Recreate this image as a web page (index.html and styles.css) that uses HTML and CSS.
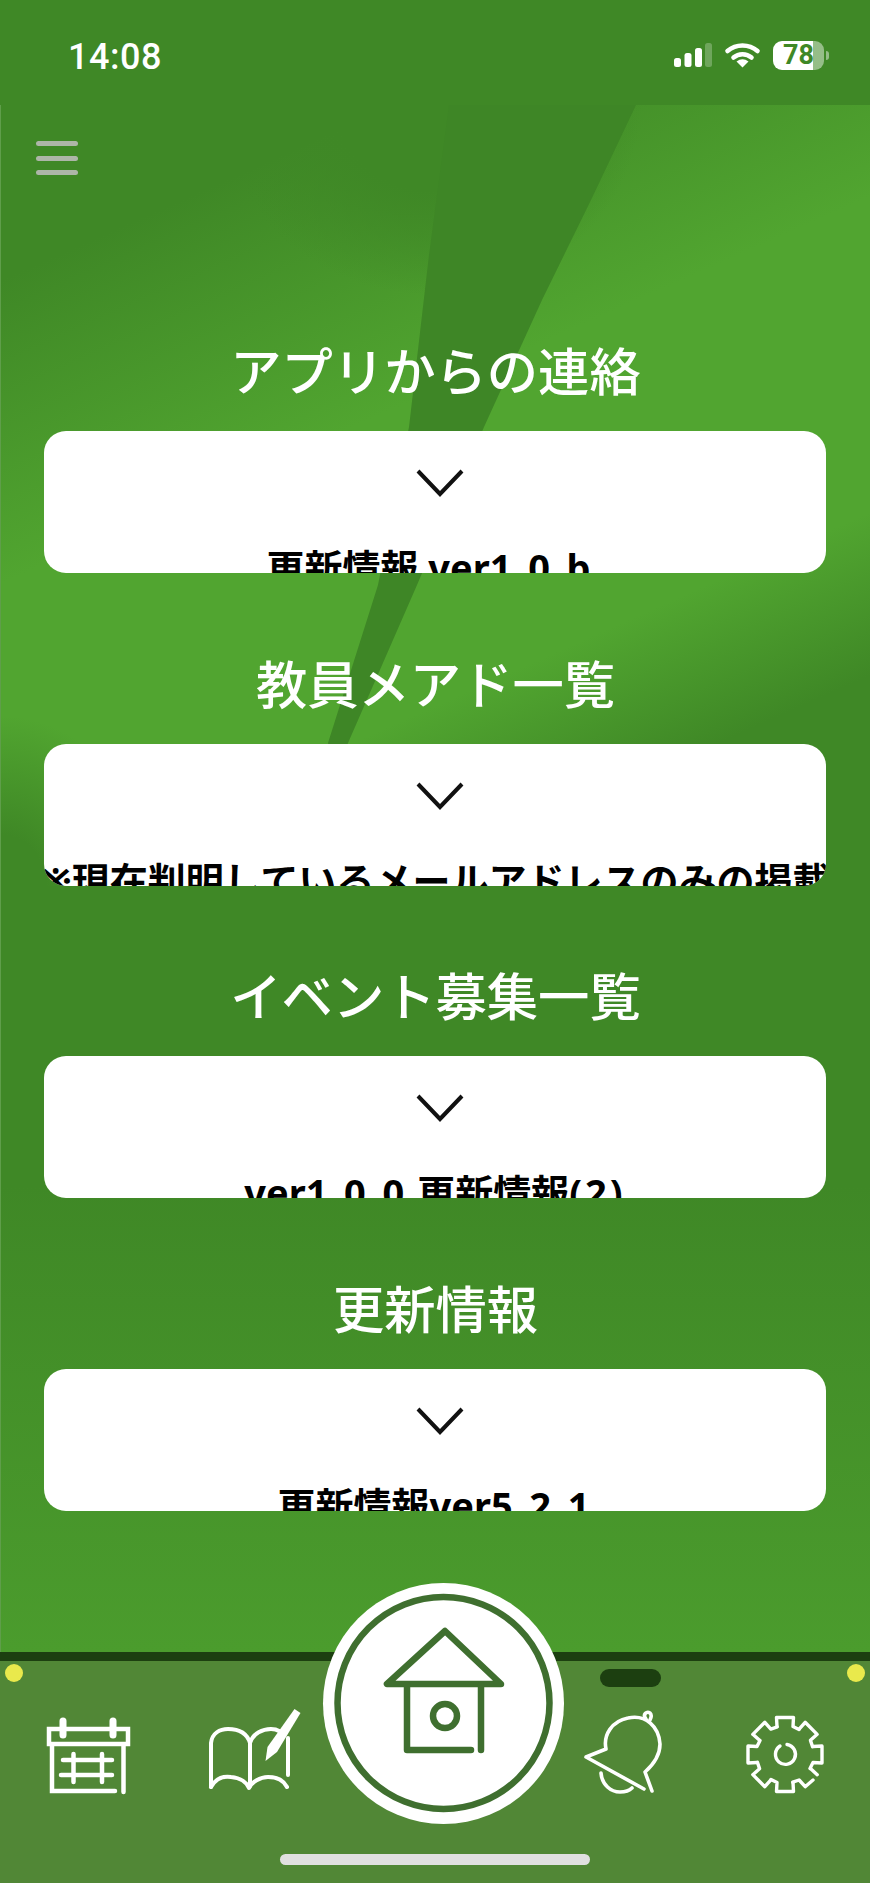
FILE: index.html
```html
<!DOCTYPE html>
<html lang="ja">
<head>
<meta charset="utf-8">
<title>ホーム</title>
<link rel="stylesheet" href="styles.css">
</head>
<body>
<div class="page">
  <header class="status">
    <span class="time">14:08</span>
    <div class="status-right">
      <svg class="signal" viewBox="674 42 38 26" width="38" height="26">
        <rect x="674" y="58" width="7" height="9" rx="2.5" fill="#fff"/>
        <rect x="684.5" y="53" width="7" height="14" rx="2.5" fill="#fff"/>
        <rect x="695" y="48" width="7" height="19" rx="2.5" fill="#fff"/>
        <rect x="705" y="43" width="7" height="24" rx="2.5" fill="#fff" fill-opacity=".25"/>
      </svg>
      <svg class="wifi" viewBox="724 41 38 28" width="38" height="28">
        <path d="M727.5 51A23 23 0 0 1 757.5 51" fill="none" stroke="#fff" stroke-width="4.6" stroke-linecap="round"/>
        <path d="M733.5 57.5A14 14 0 0 1 751.5 57.5" fill="none" stroke="#fff" stroke-width="4.6" stroke-linecap="round"/>
        <path d="M742.5 67.5L736.5 61.5Q742.5 57 748.5 61.5Z" fill="#fff"/>
      </svg>
      <div class="battery"><span>78</span></div>
    </div>
  </header>

  <main class="main">
    <div class="sky"></div>
    <div class="blade"></div>
    <div class="menu"><i></i><i></i><i></i></div>

    <section class="section">
      <h2 class="title">アプリからの連絡</h2>
      <div class="card">
        <svg class="chevron" viewBox="0 0 48 28" width="48" height="28"><path d="M2 2L24 25L46 2" fill="none" stroke="#111" stroke-width="4"/></svg>
        <p class="card-text">更新情報 ver<span class="num">1.0.b</span>&nbsp;</p>
      </div>
    </section>
    <section class="section">
      <h2 class="title">教員メアド一覧</h2>
      <div class="card">
        <svg class="chevron" viewBox="0 0 48 28" width="48" height="28"><path d="M2 2L24 25L46 2" fill="none" stroke="#111" stroke-width="4"/></svg>
        <p class="card-text">※現在判明しているメールアドレスのみの掲載</p>
      </div>
    </section>
    <section class="section">
      <h2 class="title">イベント募集一覧</h2>
      <div class="card">
        <svg class="chevron" viewBox="0 0 48 28" width="48" height="28"><path d="M2 2L24 25L46 2" fill="none" stroke="#111" stroke-width="4"/></svg>
        <p class="card-text">ver<span class="num">1.0.0</span> 更新情報<span class="num">(2)</span></p>
      </div>
    </section>
    <section class="section">
      <h2 class="title">更新情報</h2>
      <div class="card">
        <svg class="chevron" viewBox="0 0 48 28" width="48" height="28"><path d="M2 2L24 25L46 2" fill="none" stroke="#111" stroke-width="4"/></svg>
        <p class="card-text">更新情報ver<span class="num">5.2.1</span></p>
      </div>
    </section>
  </main>

  <nav class="tabbar">
    <span class="dot dot-left"></span>
    <span class="dot dot-right"></span>
    <span class="pill"></span>
    <span class="indicator"></span>

    <svg class="tab tab-calendar" viewBox="44 1705 90 90" width="90" height="90" fill="none" stroke="#fff" stroke-width="4.5" stroke-linecap="round">
      <rect x="49" y="1729" width="79" height="15"/>
      <path d="M52 1745V1791H115M123.500 1745V1792"/>
      <path d="M63 1721V1735M113 1721V1735" stroke-width="7"/>
      <path d="M63 1760H112M61 1775H112M73.500 1754V1782M102 1754V1782"/>
    </svg>

    <svg class="tab tab-book" viewBox="205 1705 100 90" width="100" height="90" fill="none" stroke="#fff" stroke-width="4" stroke-linecap="round" stroke-linejoin="round">
      <path d="M211 1787V1743C212 1733 220 1729 228 1729C238 1729 247 1733 250 1743V1786"/>
      <path d="M250 1743C253 1733 263 1729 271 1729Q276 1729 279 1731"/>
      <path d="M288 1738V1775"/>
      <path d="M211 1787C216 1778 224 1776 231 1777C241 1778 247 1783 249 1788C252 1782 260 1777 268 1777C277 1777 284 1781 287 1787"/>
      <path d="M294.500 1709L300.500 1713L277 1752L265.500 1761L267.500 1747Z" fill="#fff" stroke="none"/>
    </svg>

    <div class="home">
      <svg viewBox="323 1583 241 241" width="241" height="241" fill="none" stroke="#3f6f2f" stroke-width="6.500" stroke-linecap="round" stroke-linejoin="round">
        <circle cx="443.500" cy="1703" r="106"/>
        <path d="M387 1684H501L445 1631Z"/>
        <path d="M407 1685V1750H471M481 1685V1750"/>
        <circle cx="445" cy="1716" r="12"/>
      </svg>
    </div>

    <svg class="tab tab-bell" viewBox="580 1705 85 90" width="85" height="90" fill="none" stroke="#fff" stroke-width="3.600" stroke-linecap="round" stroke-linejoin="round">
      <path d="M644 1789L586 1757L606 1749C603 1735 612 1721 628 1718C646 1714 659 1727 660 1744C660 1755 654 1764 645 1772L652 1791"/>
      <path d="M601 1773C602 1785 611 1792 620 1792C626 1792 630 1790 632 1788"/>
      <path d="M646 1719C642 1714 647 1711 650 1713C652 1715 651 1718 650 1720"/>
    </svg>

    <svg class="tab tab-gear" viewBox="740 1705 90 90" width="90" height="90" fill="none" stroke="#fff" stroke-width="3.400" stroke-linecap="round" stroke-linejoin="round">
      <g transform="translate(785 1754.500)">
        <path id="tooth" d="M-8-28L-8.500-37H8.500L8-28L14-25"/>
        <use href="#tooth" transform="rotate(45)"/>
        <use href="#tooth" transform="rotate(90)"/>
        <path d="M25.500 14.100L32.200 20.200M28 25.500L20.200 32.200L14.100 25.500L7.800 27.600"/>
        <use href="#tooth" transform="rotate(180)"/>
        <use href="#tooth" transform="rotate(225)"/>
        <use href="#tooth" transform="rotate(270)"/>
        <use href="#tooth" transform="rotate(315)"/>
        <path d="M2-10A10 10 0 1 1-5-8.500"/>
      </g>
    </svg>
  </nav>
</div>
</body>
</html>
```
FILE: styles.css
```css
* { box-sizing: border-box; }
html, body { margin: 0; padding: 0; }
body { font-family: "Noto Sans", "Noto Sans CJK JP", sans-serif; background: #3f8826; }

.page { width: 870px; height: 1883px; display: flex; flex-direction: column; overflow: hidden; }

/* status bar */
.status { height: 105px; flex: none; background: #3f8826; display: flex; justify-content: space-between; align-items: flex-start; padding: 36px 46px 0 68px; color: #fff; }
.time { font-family: Roboto, sans-serif; font-weight: 500; font-size: 36px; line-height: 42px; letter-spacing: .5px; }
.status-right { display: flex; align-items: flex-start; padding-top: 5px; }
.signal { margin-top: 1px; }
.wifi { margin-left: 12px; }
.battery { position: relative; width: 51px; height: 29px; margin-left: 11px; border-radius: 9px; background: linear-gradient(90deg, #fff 40px, rgba(255,255,255,.45) 40px); color: #3f8826; font-family: Roboto, sans-serif; font-weight: 700; font-size: 27px; line-height: 29px; text-align: center; }
.battery::after { content: ""; position: absolute; left: 53px; top: 10px; width: 3px; height: 9px; border-radius: 0 3px 3px 0; background: rgba(255,255,255,.45); }

/* main */
.main { position: relative; flex: 1; min-height: 0; padding-top: 36px; background: linear-gradient(180deg, #3f8826 0, #3f8826 1080px, #4b9c2d 1547px); border-left: 1px solid #5f9e4a; }
.sky { position: absolute; left: 0; top: 0; width: 869px; height: 781px; background: radial-gradient(210px 190px at 430px 0, #3f8826 45%, rgba(63,136,38,0) 100%), radial-gradient(150px 170px at 0 781px, #3f8826 30%, rgba(63,136,38,0) 100%), linear-gradient(156deg, #3f8826 15%, #51a530 41%, #51a530 68%, #3f8826 82%); }
.blade { position: absolute; left: 0; top: 0; width: 869px; height: 781px; background: #3e8626; clip-path: polygon(448px 0, 635px 0, 590px 95px, 541px 195px, 483px 322px, 416px 480px, 347px 638px, 335px 675px, 327px 638px, 377px 480px, 408px 322px, 428px 150px); }

.menu { position: relative; width: 42px; height: 34px; margin-left: 35px; margin-bottom: 162px; display: flex; flex-direction: column; justify-content: space-between; }
.menu i { display: block; height: 5px; border-radius: 2.5px; background: #adb6a8; }

.section { position: relative; margin-bottom: 76.700px; }
.title { margin: 0 0 22px; height: 72px; font-weight: 500; font-size: 51.300px; line-height: 64px; color: #fff; text-align: center; font-family: "Noto Sans CJK JP", sans-serif; white-space: nowrap; }
.card { width: 782px; height: 142px; margin-left: 43px; padding-top: 38px; background: #fff; border-radius: 22px; overflow: hidden; display: flex; flex-direction: column; align-items: center; }
.chevron { flex: none; margin-left: 10px; }
.card-text { margin: 43px 0 0; font-weight: 700; font-size: 38px; line-height: 54px; color: #000; white-space: nowrap; text-align: center; }
.num { letter-spacing: 3px; }

/* tab bar */
.tabbar { position: relative; flex: none; height: 231px; background: #518736; border-top: 9px solid #1c3f10; display: flex; align-items: flex-start; padding-left: 44px; }
.tab { display: block; flex: none; margin-top: 44px; }
.tab-book { margin-left: 71px; }
.tab-bell { margin-left: 16px; }
.tab-gear { margin-left: 75px; }
.home { position: relative; flex: none; width: 241px; height: 241px; margin: -78px 0 0 18px; border-radius: 50%; background: #fff; }
.home svg { display: block; }

.dot { position: absolute; top: 3px; width: 18px; height: 18px; border-radius: 50%; background: #e9e94c; }
.dot-left { left: 5px; }
.dot-right { right: 5px; }
.pill { position: absolute; left: 600px; top: 8px; width: 61px; height: 18px; border-radius: 9px; background: #1c3f10; }
.indicator { position: absolute; left: 280px; top: 193px; width: 310px; height: 11px; border-radius: 6px; background: #e0e0e0; }
```
